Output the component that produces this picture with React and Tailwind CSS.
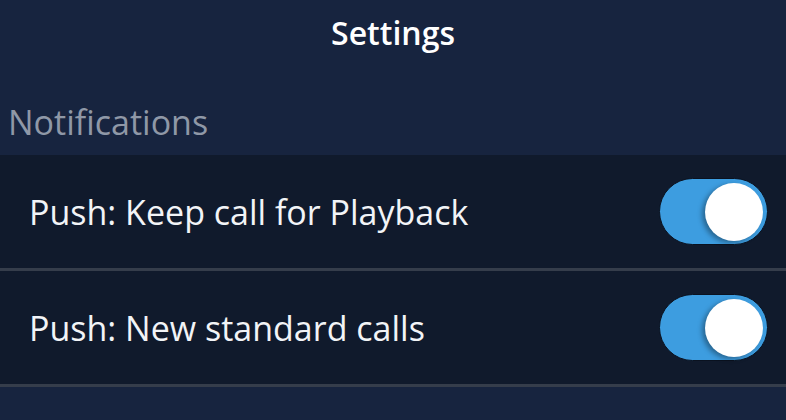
import React, { useState } from 'react'

const Toggle = ({ on, onChange }) => {
    return (
        <button
            onClick={() => onChange(!on)}
            className={
                'relative flex items-center w-[109px] h-[67px] rounded-full border border-[#0a1220] px-[4px] ' +
                (on ? 'bg-[#3d9de0] justify-end' : 'bg-[#3a4252] justify-start')
            }
        >
            <span className="block w-[58px] h-[58px] rounded-full bg-white shadow-[-3px_2px_5px_rgba(0,0,0,0.35)]"></span>
        </button>
    )
}

const SettingRow = ({ label, on, onChange }) => {
    return (
        <div className="flex items-center justify-between h-[113px] pl-[29px] pr-[18px] bg-[#101a2c] border-b-[3px] border-[#353d4b] box-content">
            <span className="text-[34px] text-[#f2f4f7] pt-[2px]">{label}</span>
            <Toggle on={on} onChange={onChange} />
        </div>
    )
}

const App = () => {

    let [keepCall, setKeepCall] = useState(true)
    let [newCalls, setNewCalls] = useState(true)

    return (
        <div className="w-[786px] h-[420px] overflow-hidden bg-[#17243f]" style={{ fontFamily: '"Open Sans", "Noto Sans", sans-serif' }}>
            <div className="flex items-center justify-center h-[63px] pt-[3px]">
                <h1 className="text-[32px] font-semibold text-white">Settings</h1>
            </div>

            <div className="flex items-end h-[92px] pl-[8px] pb-[7px]">
                <h2 className="text-[34px] font-normal text-[#8f98a7]">Notifications</h2>
            </div>

            <div>
                <SettingRow label="Push: Keep call for Playback" on={keepCall} onChange={setKeepCall} />
                <SettingRow label="Push: New standard calls" on={newCalls} onChange={setNewCalls} />
            </div>
        </div>
    )
}

export default App
